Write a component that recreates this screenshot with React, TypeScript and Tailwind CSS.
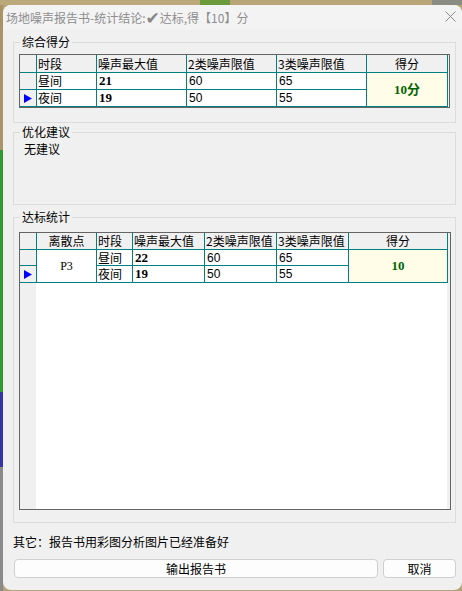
import { ReactNode } from "react";

const cjk = "font-['Microsoft_YaHei','Noto_Sans_CJK_SC',sans-serif]";

const Tri = () => (
  <svg width="8" height="9" viewBox="0 0 8 9" className="ml-[4px]">
    <polygon points="0,0 8,4.5 0,9" fill="#0000ff" />
  </svg>
);

const Cell = ({
  children,
  className = "",
}: {
  children?: ReactNode;
  className?: string;
}) => (
  <div
    className={`flex items-center border-r border-b border-[#008080] overflow-hidden whitespace-nowrap ${className}`}
  >
    {children}
  </div>
);

const Num = ({ v }: { v: string }) => (
  <span className="pl-[2px] font-['Liberation_Sans',Arial,sans-serif] text-[12px] text-black">{v}</span>
);

const Bold = ({ v }: { v: string }) => (
  <span className="pl-[2px] font-['Liberation_Serif',serif] text-[13px] font-bold text-black">{v}</span>
);

const Head = ({ t, center }: { t: string; center?: boolean }) => (
  <span className={`${center ? "w-full text-center" : "pl-[1px]"} text-[12px] text-black`}>{t}</span>
);

const Group = ({
  title,
  className = "",
  children,
}: {
  title: string;
  className?: string;
  children?: ReactNode;
}) => (
  <fieldset className={`ml-[10px] w-[443px] border border-[#dcdcdc] ${className}`}>
    <legend className="ml-[6px] px-[2px] text-[12px] leading-[14px] text-black">{title}</legend>
    {children}
  </fieldset>
);

export default function App() {
  return (
    <div className={`w-[462px] h-[591px] overflow-hidden bg-[#b5a377] flex flex-col ${cjk}`}>
      <div className="h-[5px] flex">
        <div className="w-[200px] bg-[#bba97c]" />
        <div className="w-[30px] bg-[#6c9a3c]" />
        <div className="flex-1 bg-[#b9a678]" />
        <div className="w-[30px] bg-[#8a8c84]" />
      </div>
      <div className="flex flex-1">
        <div className="w-[3px] flex flex-col">
          <div className="h-[145px] bg-[#a89464]" />
          <div className="h-[242px] bg-[#2f9a32]" />
          <div className="h-[75px] bg-[#3434a8]" />
          <div className="flex-1 bg-[#8a8a8a]" />
        </div>
        <div className="flex-1 h-[585px] bg-[#f0f0f0] rounded-[8px] flex flex-col">
          {/* title bar */}
          <div className="h-[25px] flex items-center justify-between pl-[3px] pr-[6px] rounded-t-[8px] bg-[#f3f3f3]">
            <span className="text-[12px] text-[#8e8e8e] whitespace-nowrap flex items-center">
              场地噪声报告书-统计结论:
              <span className="font-['DejaVu_Sans',sans-serif] text-[17px] leading-[14px] font-bold text-[#858585]">✔</span>
              达标,得【10】分
            </span>
            <svg width="11" height="11" viewBox="0 0 11 11" className="mb-[2px]">
              <path d="M0.5 0.5 L10.5 10.5 M10.5 0.5 L0.5 10.5" stroke="#8a8a8a" strokeWidth="1" />
            </svg>
          </div>

          {/* 综合得分 */}
          <Group title="综合得分" className="mt-[5px] pt-[5px] pb-[14px]">
            <div className="ml-[5px] w-[431px] h-[54px] border border-[#646464] bg-[#f0f0f0]">
              <div className="grid grid-cols-[17px_60px_90px_90px_90px_81px] grid-rows-[18px_17px_17px]">
                <Cell className="bg-[#f0f0f0]" />
                <Cell className="bg-[#f0f0f0]"><Head t="时段" /></Cell>
                <Cell className="bg-[#f0f0f0]"><Head t="噪声最大值" /></Cell>
                <Cell className="bg-[#f0f0f0]"><Head t="2类噪声限值" /></Cell>
                <Cell className="bg-[#f0f0f0]"><Head t="3类噪声限值" /></Cell>
                <Cell className="bg-[#f0f0f0]"><Head t="得分" center /></Cell>

                <Cell className="bg-[#f0f0f0]" />
                <Cell className="bg-white"><Head t="昼间" /></Cell>
                <Cell className="bg-white"><Bold v="21" /></Cell>
                <Cell className="bg-white"><Num v="60" /></Cell>
                <Cell className="bg-white"><Num v="65" /></Cell>
                <Cell className="row-span-2 bg-[#fffde8] justify-center">
                  <span className="font-['Liberation_Serif','Noto_Sans_CJK_SC',serif] text-[13px] font-bold text-[#006400]">10分</span>
                </Cell>

                <Cell className="bg-[#f0f0f0]"><Tri /></Cell>
                <Cell className="bg-white"><Head t="夜间" /></Cell>
                <Cell className="bg-white"><Bold v="19" /></Cell>
                <Cell className="bg-white"><Num v="50" /></Cell>
                <Cell className="bg-white"><Num v="55" /></Cell>
              </div>
            </div>
          </Group>

          {/* 优化建议 */}
          <Group title="优化建议" className="mt-[2px] h-[80px] pt-[3px]">
            <div className="ml-[10px] text-[12px] leading-[14px] text-black">无建议</div>
          </Group>

          {/* 达标统计 */}
          <Group title="达标统计" className="mt-[5px] pt-[8px] pb-[12px]">
            <div className="ml-[5px] w-[432px] h-[278px] border border-[#646464] bg-[#f0f0f0] flex flex-col">
              <div className="grid grid-cols-[17px_60px_36px_72px_72px_72px_99px] grid-rows-[17px_16px_17px]">
                <Cell className="bg-[#f0f0f0]" />
                <Cell className="bg-[#f0f0f0]"><Head t="离散点" center /></Cell>
                <Cell className="bg-[#f0f0f0]"><Head t="时段" /></Cell>
                <Cell className="bg-[#f0f0f0]"><Head t="噪声最大值" /></Cell>
                <Cell className="bg-[#f0f0f0]"><Head t="2类噪声限值" /></Cell>
                <Cell className="bg-[#f0f0f0]"><Head t="3类噪声限值" /></Cell>
                <Cell className="bg-[#f0f0f0]"><Head t="得分" center /></Cell>

                <Cell className="bg-[#f0f0f0]" />
                <Cell className="row-span-2 bg-white justify-center">
                  <span className="font-['Liberation_Serif',serif] text-[12px] text-black">P3</span>
                </Cell>
                <Cell className="bg-white"><Head t="昼间" /></Cell>
                <Cell className="bg-white"><Bold v="22" /></Cell>
                <Cell className="bg-white"><Num v="60" /></Cell>
                <Cell className="bg-white"><Num v="65" /></Cell>
                <Cell className="row-span-2 bg-[#fffde8] justify-center">
                  <span className="font-['Liberation_Serif',serif] text-[13px] font-bold text-[#006400]">10</span>
                </Cell>

                <Cell className="bg-[#f0f0f0]"><Tri /></Cell>
                <Cell className="bg-white"><Head t="夜间" /></Cell>
                <Cell className="bg-white"><Bold v="19" /></Cell>
                <Cell className="bg-white"><Num v="50" /></Cell>
                <Cell className="bg-white"><Num v="55" /></Cell>
              </div>
              <div className="flex flex-1">
                <div className="w-[16px] bg-[#f0f0f0]" />
                <div className="w-[411px] bg-white" />
              </div>
            </div>
          </Group>

          <div className="ml-[10px] mt-[12px] text-[12px] leading-[14px] text-black">
            其它：报告书用彩图分析图片已经准备好
          </div>

          <div className="mt-[10px] ml-[11px] flex gap-[5px]">
            <button className="w-[364px] h-[19px] rounded-[4px] border border-[#cfcfcf] bg-[#fdfdfd] text-[12px] leading-[16px] text-black">
              输出报告书
            </button>
            <button className="w-[73px] h-[19px] rounded-[4px] border border-[#cfcfcf] bg-[#fdfdfd] text-[12px] leading-[16px] text-black">
              取消
            </button>
          </div>
        </div>
      </div>
    </div>
  );
}
